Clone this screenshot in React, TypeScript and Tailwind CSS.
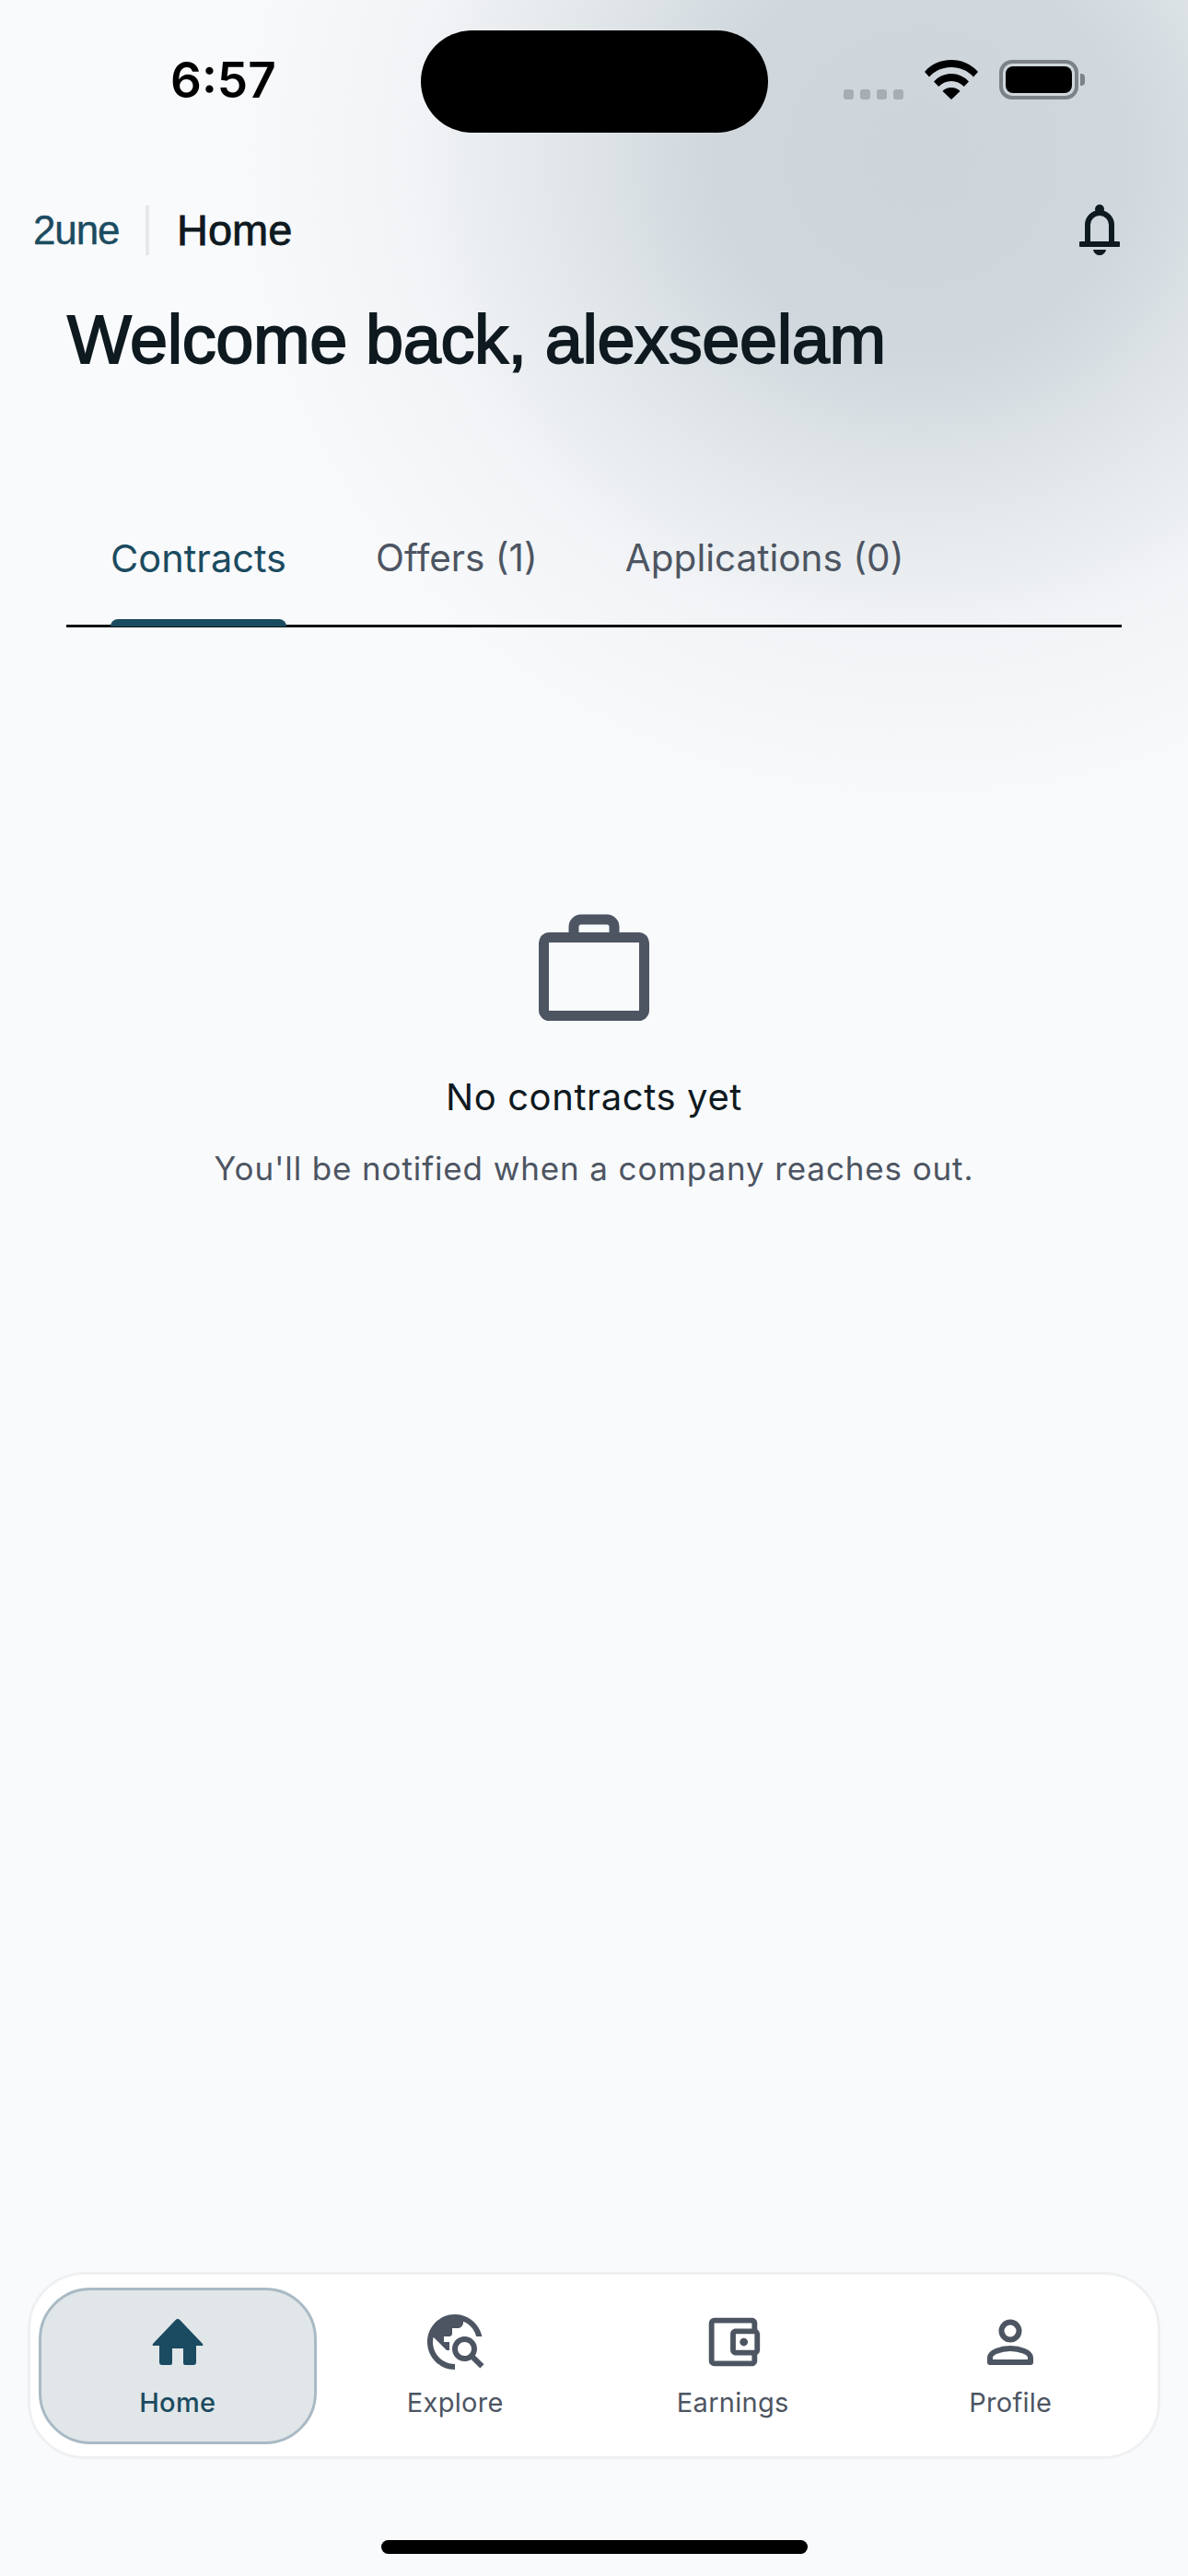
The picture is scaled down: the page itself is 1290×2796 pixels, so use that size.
import { MdOutlineTravelExplore, MdOutlineAccountBalanceWallet } from 'react-icons/md';

/* Status bar: clock, island, signal dots, wifi and battery */
function StatusBar() {
  return (
    <div className="flex items-start h-[144px] pt-[33px]">
      <div className="w-[457px] pl-[185px] pt-[30px] text-[53px] leading-[48px] font-semibold text-black font-['Inter',sans-serif]">
        6:57
      </div>
      <div className="w-[377px] h-[111px] rounded-[56px] bg-black" />
      <div className="flex items-end pl-[82px] pt-[32px] h-[75px]">
        <div className="flex gap-[7px]">
          {[0, 1, 2, 3].map((i) => (
            <div key={i} className="w-[11px] h-[11px] rounded-[3px] bg-[#a6aeb2]" />
          ))}
        </div>
        <svg className="ml-[23px]" width="58" height="43" viewBox="0 0 58 43">
          <path d="M29 0C18 0 8 4 0 13l5 5.500C11 11.500 20 8 29 8s18 3.500 24 10.500l5-5.500C50 4 40 0 29 0z" fill="#000" />
          <path d="M29 15c-7 0-14 3-19 8.500l5.200 5.500C19 25 24 23 29 23s10 2 13.800 6l5.200-5.500C43 18 36 15 29 15z" fill="#000" />
          <path d="M29 30c-4 0-7 1.500-9.500 4L29 43l9.500-9c-2.500-2.500-5.500-4-9.500-4z" fill="#000" />
        </svg>
        <div className="ml-[23px] w-[86px] h-[43px] rounded-[14px] border-[4px] border-[#7d8286] p-[3px]">
          <div className="w-full h-full rounded-[8px] bg-black" />
        </div>
        <div className="ml-[2px] mb-[15px] w-[5px] h-[13px] rounded-r-[4px] bg-[#7d8286]" />
      </div>
    </div>
  );
}

function Bell() {
  return (
    <svg width="44" height="56" viewBox="0 0 44 56" fill="none">
      <circle cx="22" cy="5" r="5" fill="#0e1920" />
      <path d="M9 40V22a13 13 0 0 1 26 0v18" stroke="#0e1920" strokeWidth="6" />
      <path d="M2 43h40" stroke="#0e1920" strokeWidth="6" strokeLinecap="round" />
      <path d="M15 49h14c-1 4-4 6-7 6s-6-2-7-6z" fill="#0e1920" />
    </svg>
  );
}

function Header() {
  return (
    <div className="flex items-center h-[56px] mt-[78px] pl-[36px] pr-[74px]">
      <span className="w-[122px] text-[44px] leading-[56px] tracking-[-0.025em] text-[#1b4b60] font-['Liberation_Sans',sans-serif] [-webkit-text-stroke:0.4px_#1b4b60]">
        2une
      </span>
      <div className="w-[4px] h-[54px] bg-[#e6e8eb]" />
      <span className="ml-[30px] text-[47px] leading-[56px] text-[#0e1920] font-['Liberation_Sans',sans-serif] [-webkit-text-stroke:0.8px_#0e1920]">
        Home
      </span>
      <div className="ml-auto">
        <Bell />
      </div>
    </div>
  );
}

function Tabs() {
  const tabs = [
    { label: 'Contracts', active: true },
    { label: 'Offers (1)', active: false },
    { label: 'Applications (0)', active: false },
  ];
  return (
    <div className="mt-[138px] mx-[72px] flex gap-[95px] pl-[48px] border-b-[3px] border-[#0b0f12] h-[129px]">
      {tabs.map((t) => (
        <div key={t.label} className={`relative h-full pt-[29px] ${t.active ? 'mr-[2px]' : ''}`}>
          <span className={`leading-[50px] font-['Inter',sans-serif] ${t.active ? 'text-[41.500px] text-[#1b4b60]' : 'text-[40.500px] text-[#4d5562]'}`}>
            {t.label}
          </span>
          {t.active && <div className="absolute left-0 right-0 -bottom-[2px] h-[8px] rounded-t-[8px] bg-[#1b4b60]" />}
        </div>
      ))}
    </div>
  );
}

function Briefcase() {
  return (
    <svg width="120" height="116" viewBox="0 0 120 116" fill="none" stroke="#4d5562" strokeWidth="11">
      <rect x="5.500" y="25.500" width="109" height="85" rx="6" />
      <path d="M38 25V14a8 8 0 0 1 8-8h28a8 8 0 0 1 8 8v11" />
    </svg>
  );
}

function HomeIcon() {
  return (
    <svg width="56" height="50" viewBox="0 0 56 50" fill="#1b4b60">
      <path d="M25.500 1.200a3.400 3.400 0 0 1 5 0L55 27c.7 .8 .3 2-.8 2H48v18a3 3 0 0 1-3 3H36a2 2 0 0 1-2-2V32H22v16a2 2 0 0 1-2 2H11a3 3 0 0 1-3-3V29H1.800c-1.100 0-1.500-1.200-.8-2z" />
    </svg>
  );
}

function PersonIcon() {
  return (
    <svg width="50" height="50" viewBox="0 0 50 50" fill="none" stroke="#4d5562" strokeWidth="6">
      <circle cx="25" cy="13" r="9.500" />
      <path d="M3 47v-5c0-6 12-10 22-10s22 4 22 10v5z" strokeLinejoin="round" />
    </svg>
  );
}

function NavItem({ label, icon, active }: { label: string; icon: React.ReactNode; active?: boolean }) {
  return (
    <div
      className={`flex-1 flex flex-col items-center rounded-[56px] border-[3px] pt-[23px] ${
        active ? 'bg-[#e1e6e9] border-[#a9bac5] text-[#1b4b60]' : 'border-transparent text-[#4d5562]'
      }`}
    >
      <div className="h-[66px] flex items-center justify-center">{icon}</div>
      <span className={`mt-[13px] text-[29px] leading-[40px] tracking-[0.01em] font-['Inter',sans-serif] ${active ? 'font-medium' : ''}`}>{label}</span>
    </div>
  );
}

export default function App() {
  return (
    <div className="relative w-[1290px] h-[2796px] flex flex-col overflow-hidden bg-[#f9fafc]">
      <div className="absolute inset-0 bg-[radial-gradient(ellipse_760px_720px_at_1000px_170px,#cdd5db_0%,#d0d8dd_30%,#e2e7ea_52%,#f1f3f6_72%,#f9fafc_100%)]" />
      <div className="relative flex flex-col flex-1">
        <StatusBar />
        <Header />
        <h1 className="mt-[46px] ml-[73px] text-[74px] leading-[90px] tracking-[-0.006em] text-[#0e1920] font-['Liberation_Sans',sans-serif] [-webkit-text-stroke:1.8px_#0e1920]">
          Welcome back, alexseelam
        </h1>
        <Tabs />
        <div className="mt-[311px] flex flex-col items-center">
          <Briefcase />
          <div className="mt-[58px] text-[40px] leading-[50px] tracking-[0.015em] text-[#0e1920] font-['Inter',sans-serif]">No contracts yet</div>
          <div className="mt-[30px] text-[35px] leading-[44px] tracking-[0.025em] text-[#4d5562] font-['Inter',sans-serif]">
            You'll be notified when a company reaches out.
          </div>
        </div>
        <div className="mt-auto mx-[30px] h-[203px] flex rounded-[62px] border-[3px] border-[#eef0f2] bg-white px-[9px] pt-[14px] pb-[13px]">
          <NavItem active label="Home" icon={<HomeIcon />} />
          <NavItem label="Explore" icon={<MdOutlineTravelExplore size={72} />} />
          <NavItem label="Earnings" icon={<MdOutlineAccountBalanceWallet size={70} />} />
          <NavItem label="Profile" icon={<PersonIcon />} />
        </div>
        <div className="mt-[88px] mb-[24px] mx-auto w-[463px] h-[15px] rounded-full bg-black" />
      </div>
    </div>
  );
}
